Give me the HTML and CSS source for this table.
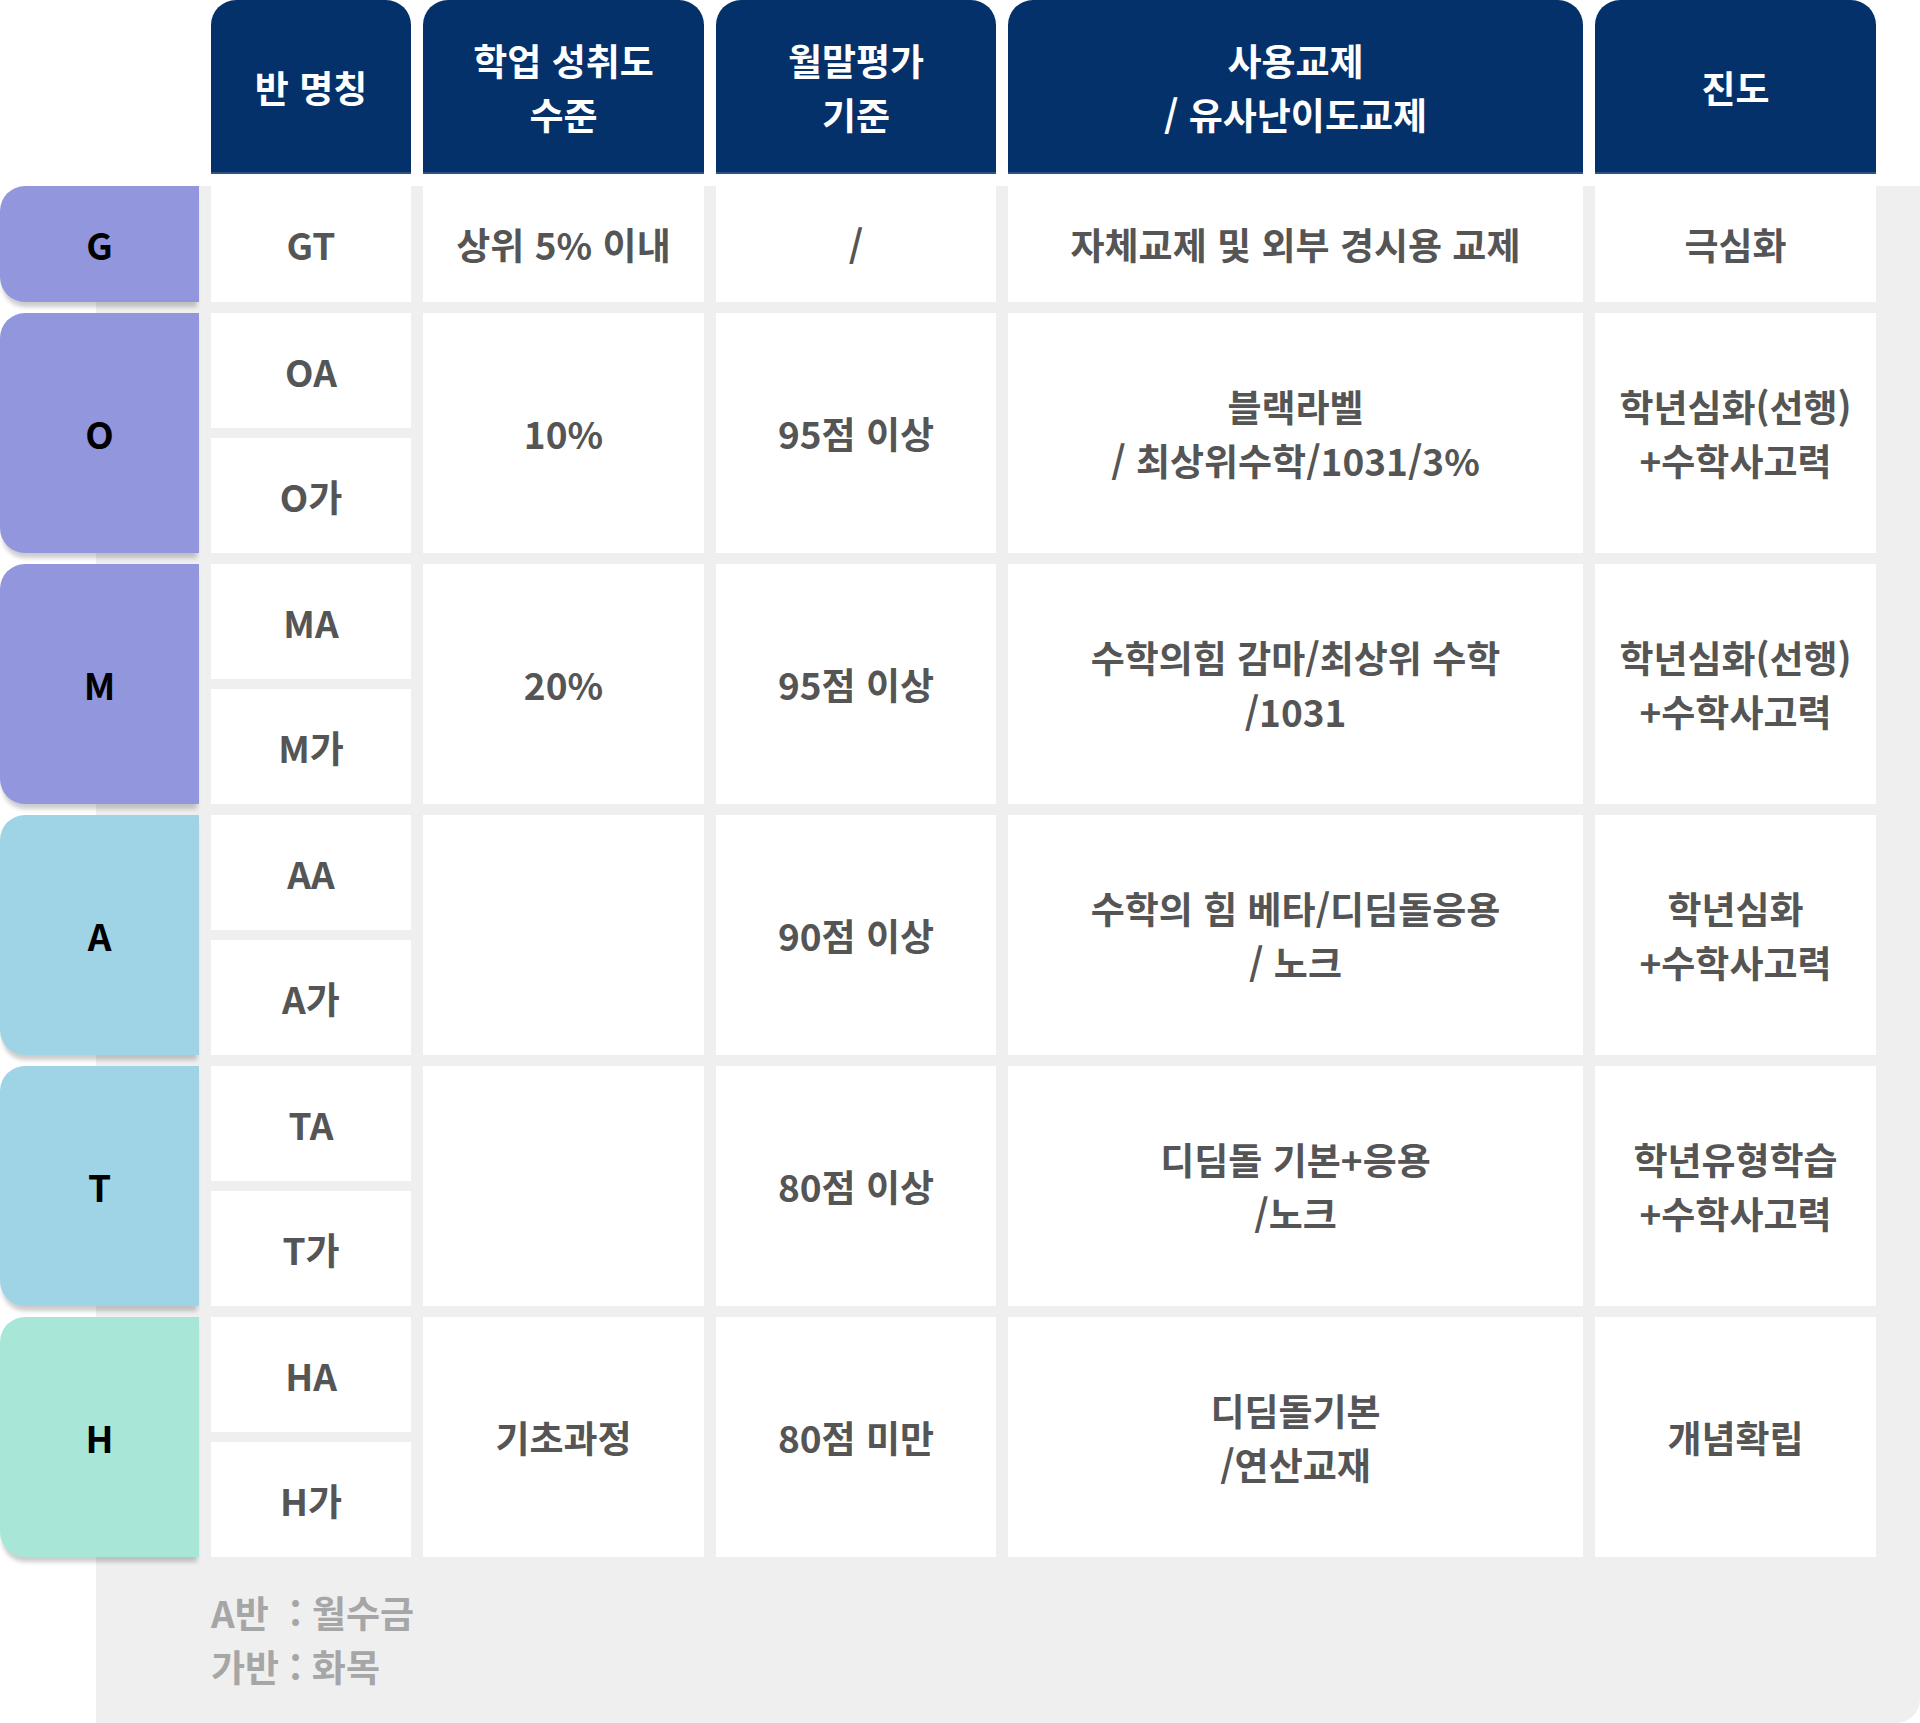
FILE: index.html
```html
<!DOCTYPE html>
<html lang="ko">
<head>
<meta charset="utf-8">
<title>반 편성 안내</title>
<link rel="stylesheet" href="styles.css">
</head>
<body>
<div class="wrap">
  <div class="cols head">
    <div class="hblank"></div>
    <div class="hcell">반 명칭</div>
    <div class="hcell">학업 성취도<br>수준</div>
    <div class="hcell">월말평가<br>기준</div>
    <div class="hcell">사용교제<br>/ 유사난이도교제</div>
    <div class="hcell">진도</div>
  </div>

  <div class="board">
    <div class="cols group single">
      <div class="label violet">G</div>
      <div class="names"><div class="cell">GT</div></div>
      <div class="cell">상위 5% 이내</div>
      <div class="cell">/</div>
      <div class="cell">자체교제 및 외부 경시용 교제</div>
      <div class="cell">극심화</div>
    </div>

    <div class="cols group">
      <div class="label violet">O</div>
      <div class="names"><div class="cell">OA</div><div class="cell">O가</div></div>
      <div class="cell">10%</div>
      <div class="cell">95점 이상</div>
      <div class="cell">블랙라벨<br>/ 최상위수학/1031/3%</div>
      <div class="cell">학년심화(선행)<br>+수학사고력</div>
    </div>

    <div class="cols group">
      <div class="label violet">M</div>
      <div class="names"><div class="cell">MA</div><div class="cell">M가</div></div>
      <div class="cell">20%</div>
      <div class="cell">95점 이상</div>
      <div class="cell">수학의힘 감마/최상위 수학<br>/1031</div>
      <div class="cell">학년심화(선행)<br>+수학사고력</div>
    </div>

    <div class="cols group">
      <div class="label sky">A</div>
      <div class="names"><div class="cell">AA</div><div class="cell">A가</div></div>
      <div class="cell"></div>
      <div class="cell">90점 이상</div>
      <div class="cell">수학의 힘 베타/디딤돌응용<br>/ 노크</div>
      <div class="cell">학년심화<br>+수학사고력</div>
    </div>

    <div class="cols group">
      <div class="label sky">T</div>
      <div class="names"><div class="cell">TA</div><div class="cell">T가</div></div>
      <div class="cell"></div>
      <div class="cell">80점 이상</div>
      <div class="cell">디딤돌 기본+응용<br>/노크</div>
      <div class="cell">학년유형학습<br>+수학사고력</div>
    </div>

    <div class="cols group">
      <div class="label mint">H</div>
      <div class="names"><div class="cell">HA</div><div class="cell">H가</div></div>
      <div class="cell">기초과정</div>
      <div class="cell">80점 미만</div>
      <div class="cell">디딤돌기본<br>/연산교재</div>
      <div class="cell">개념확립</div>
    </div>

    <div class="notes">
      <p>A반&nbsp; : 월수금</p>
      <p>가반 : 화목</p>
    </div>
  </div>
</div>
</body>
</html>
```

FILE: styles.css
```css
html, body {
  margin: 0;
  padding: 0;
  background: #ffffff;
}

body {
  font-family: "Noto Sans CJK KR", "Noto Sans", sans-serif;
  font-weight: 700;
}

.wrap {
  width: 1920px;
}

.cols {
  display: grid;
  grid-template-columns: 199px 200px 281px 280px 575px 281px;
  column-gap: 12px;
}

.head {
  height: 174px;
}

.hcell {
  background: #05316a;
  color: #ffffff;
  border-radius: 25px 25px 0 0;
  box-shadow: inset 0 -2px 0 #2d5286;
  display: flex;
  align-items: center;
  justify-content: center;
  text-align: center;
  font-size: 37px;
  line-height: 54px;
}

.board {
  margin-top: 12px;
  margin-left: 96px;
  background: #efefef;
  border-bottom-right-radius: 24px;
}

.group {
  margin-left: -96px;
}

.group + .group {
  margin-top: 11px;
}

.label {
  border-radius: 25px 0 0 25px;
  box-shadow: 0 7px 4px -2px rgba(0, 0, 0, 0.2);
  display: flex;
  align-items: center;
  justify-content: center;
  color: #000000;
  font-size: 37px;
  position: relative;
}

.violet { background: #9196dd; }
.sky { background: #9fd4e6; }
.mint { background: #a8e7d8; }

.names {
  display: flex;
  flex-direction: column;
  gap: 10px;
}

.cell {
  background: #ffffff;
  min-height: 115px;
  display: flex;
  align-items: center;
  justify-content: center;
  text-align: center;
  color: #555555;
  font-size: 37px;
  line-height: 54px;
}

.single .cell {
  min-height: 116px;
}

.notes {
  padding: 28px 0 30px 115px;
  color: #a6a6a6;
  font-size: 37px;
  line-height: 54px;
}

.notes p {
  margin: 0;
}
```
